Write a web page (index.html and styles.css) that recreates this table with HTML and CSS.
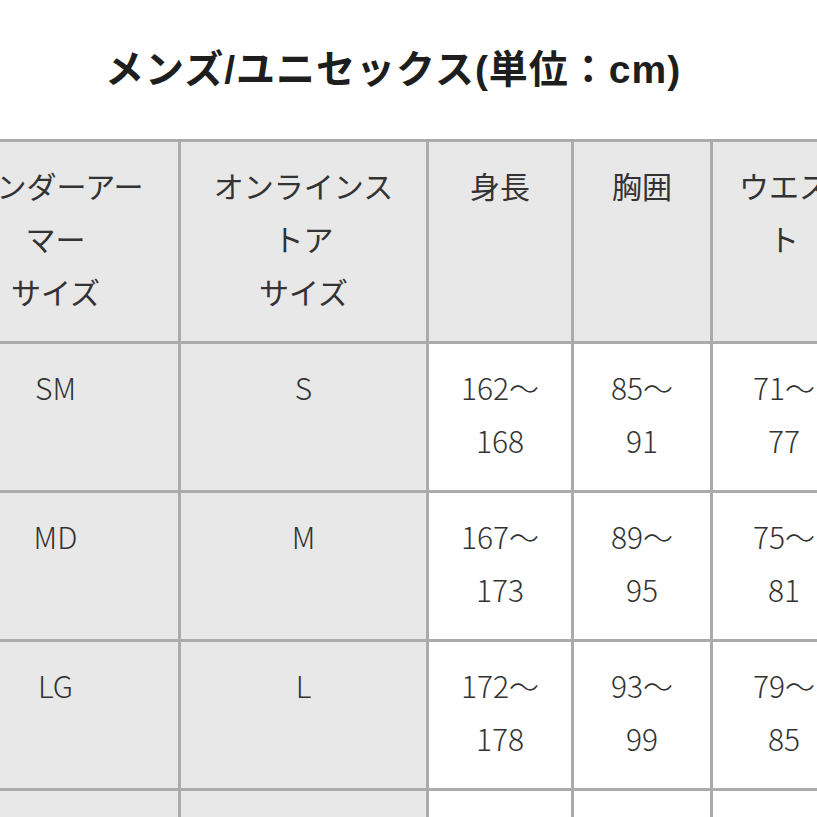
FILE: index.html
```html
<!DOCTYPE html>
<html lang="ja">
<head>
<meta charset="utf-8">
<title>サイズ表</title>
<link rel="stylesheet" href="styles.css">
</head>
<body>
<div class="page">
  <h1 class="title">メンズ/ユニセックス(単位：cm)</h1>
  <div class="table-wrap">
    <table class="size-table">
      <colgroup>
        <col class="c1"><col class="c2"><col class="c3"><col class="c4"><col class="c5"><col class="c6">
      </colgroup>
      <thead>
        <tr>
          <th>アンダーアーマー<br>サイズ</th>
          <th>オンラインストア<br>サイズ</th>
          <th>身長</th>
          <th>胸囲</th>
          <th>ウエスト</th>
          <th>ヒップ</th>
        </tr>
      </thead>
      <tbody>
        <tr>
          <td class="gray">SM</td><td class="gray">S</td>
          <td>162〜<br>168</td><td>85〜<br>91</td><td>71〜<br>77</td><td>86〜<br>92</td>
        </tr>
        <tr>
          <td class="gray">MD</td><td class="gray">M</td>
          <td>167〜<br>173</td><td>89〜<br>95</td><td>75〜<br>81</td><td>90〜<br>96</td>
        </tr>
        <tr>
          <td class="gray">LG</td><td class="gray">L</td>
          <td>172〜<br>178</td><td>93〜<br>99</td><td>79〜<br>85</td><td>94〜<br>100</td>
        </tr>
        <tr>
          <td class="gray">XL</td><td class="gray">XL</td>
          <td>177〜<br>183</td><td>97〜<br>103</td><td>83〜<br>89</td><td>98〜<br>104</td>
        </tr>
      </tbody>
    </table>
  </div>
</div>
</body>
</html>
```

FILE: styles.css
```css
html, body {
  margin: 0;
  padding: 0;
  background: #ffffff;
}

body {
  width: 817px;
  height: 817px;
  overflow: hidden;
  font-family: "Noto Sans CJK JP", "Noto Sans", sans-serif;
  color: #333333;
}

.page {
  padding-top: 44px;
}

.title {
  margin: 0 0 0 105px;
  font-family: "Liberation Sans", "Noto Sans CJK JP", sans-serif;
  font-weight: 700;
  font-size: 39px;
  letter-spacing: 1px;
  line-height: 52px;
  color: #1e1e1e;
  white-space: nowrap;
}

.table-wrap {
  margin-top: 43px;
  margin-left: -70px;
}

.size-table {
  border-collapse: collapse;
  table-layout: fixed;
  width: 1070px;
}

.c1 { width: 248px; }
.c2 { width: 248px; }
.c3 { width: 145px; }
.c4 { width: 139px; }
.c5 { width: 145px; }
.c6 { width: 145px; }

.size-table th,
.size-table td {
  border: 3px solid #ababab;
  padding: 17px 22px 23px;
  vertical-align: top;
  text-align: center;
  font-size: 30px;
  line-height: 53px;
  font-weight: 400;
  color: #333333;
  line-break: strict;
}

.size-table th {
  background: #e8e8e8;
  height: 158px;
}

.size-table td {
  background: #ffffff;
  font-weight: 300;
  height: 106px;
}

.size-table td.gray {
  background: #e8e8e8;
}
```
